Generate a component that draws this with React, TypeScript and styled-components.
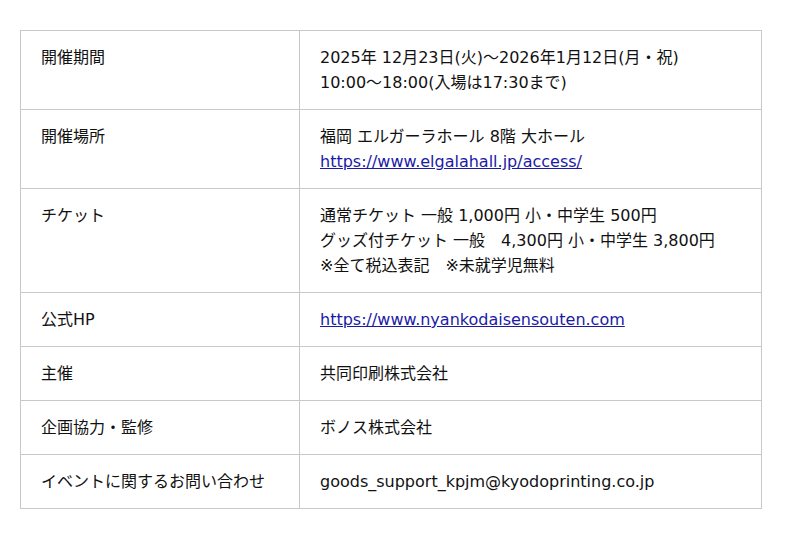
import React from "react";
import styled, { createGlobalStyle } from "styled-components";

const GlobalStyle = createGlobalStyle`
  body {
    margin: 0;
    background: #fff;
    font-family: "DejaVu Sans", "Noto Sans CJK JP", sans-serif;
    color: #111;
  }
`;

const Page = styled.div`
  padding: 30px 0 0 20px;
`;

const Table = styled.table`
  width: 742px;
  border-collapse: collapse;
  font-size: 16px;
  line-height: 25px;
`;

const Head = styled.th`
  width: 238px;
  text-align: left;
  font-weight: normal;
  vertical-align: top;
  padding: 14px 20px;
  border: 1px solid #c8c8c8;
`;

const Cell = styled.td`
  vertical-align: top;
  padding: 14px 20px;
  border: 1px solid #c8c8c8;
`;

const Link = styled.a`
  color: #1a1aa6;
  text-decoration: underline;
`;

const rows: { label: string; lines: React.ReactNode[] }[] = [
  {
    label: "開催期間",
    lines: [
      "2025年 12月23日(火)〜2026年1月12日(月・祝)",
      "10:00〜18:00(入場は17:30まで)",
    ],
  },
  {
    label: "開催場所",
    lines: [
      "福岡 エルガーラホール 8階 大ホール",
      <Link href="#">https://www.elgalahall.jp/access/</Link>,
    ],
  },
  {
    label: "チケット",
    lines: [
      "通常チケット 一般 1,000円 小・中学生 500円",
      "グッズ付チケット 一般\u30004,300円 小・中学生 3,800円",
      "※全て税込表記\u3000※未就学児無料",
    ],
  },
  {
    label: "公式HP",
    lines: [<Link href="#">https://www.nyankodaisensouten.com</Link>],
  },
  { label: "主催", lines: ["共同印刷株式会社"] },
  { label: "企画協力・監修", lines: ["ボノス株式会社"] },
  {
    label: "イベントに関するお問い合わせ",
    lines: ["goods_support_kpjm@kyodoprinting.co.jp"],
  },
];

const App = () => {
  return (
    <Page>
      <GlobalStyle />
      <Table>
        <tbody>
          {rows.map((r) => (
            <tr key={r.label}>
              <Head>{r.label}</Head>
              <Cell>
                {r.lines.map((l, i) => (
                  <React.Fragment key={i}>
                    {i > 0 && <br />}
                    {l}
                  </React.Fragment>
                ))}
              </Cell>
            </tr>
          ))}
        </tbody>
      </Table>
    </Page>
  );
};

export default App;
